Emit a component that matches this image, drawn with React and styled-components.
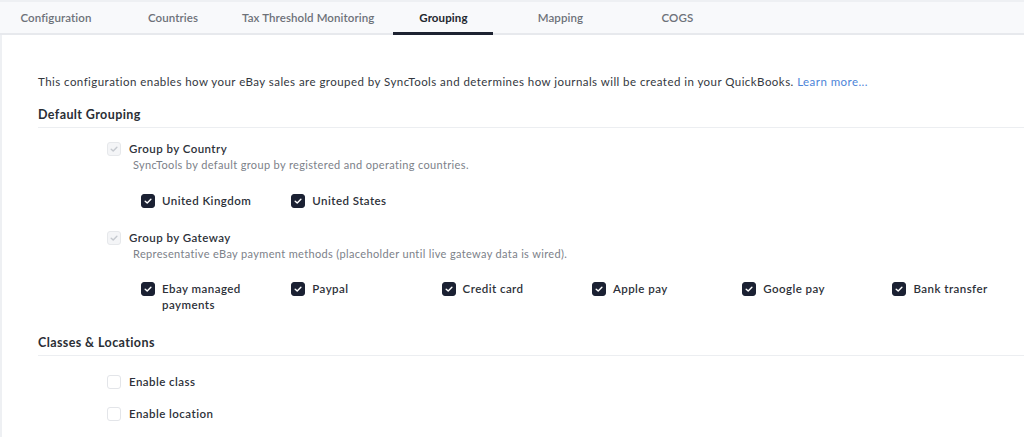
import React from "react";
import styled, { createGlobalStyle } from "styled-components";

const Global = createGlobalStyle`
  html, body { margin: 0; padding: 0; background: #ffffff; }
  body { font-family: "Lato", "Noto Sans", sans-serif; color: #2b2f36; letter-spacing: 0.45px; }
  * { box-sizing: border-box; }
`;

const Page = styled.div`
  width: 1024px;
  height: 437px;
  overflow: hidden;
  display: flex;
  flex-direction: column;
`;

const TabBar = styled.nav`
  height: 35px;
  flex: none;
  display: flex;
  gap: 17px;
  padding-left: 6px;
  background: #f8f9fb;
  border-top: 2px solid #eef0f3;
  border-bottom: 2px solid #e7e9ed;
`;

const Tab = styled.div`
  min-width: 100px;
  padding: 0 2px;
  display: flex;
  align-items: center;
  justify-content: center;
  font-size: 11.5px;
  letter-spacing: 0.1px;
  font-weight: ${(p) => (p.$active ? 700 : 600)};
  color: ${(p) => (p.$active ? "#23272f" : "#6d7179")};
  border-bottom: 3px solid ${(p) => (p.$active ? "#1e2331" : "transparent")};
  margin-bottom: -2px;
  padding-top: 1px;
`;

const Content = styled.div`
  flex: 1;
  border-left: 2px solid #eef0f3;
  padding: 39px 0 0 36px;
`;

const Intro = styled.p`
  margin: 0;
  font-size: 11.5px;
  line-height: 16px;
  color: #33373e;
`;

const Link = styled.a`
  color: #4c84d8;
  text-decoration: none;
`;

const SectionHeading = styled.h3`
  margin: ${(p) => p.$top}px 0 0 0;
  font-size: 12.5px;
  line-height: 16px;
  font-weight: 700;
  letter-spacing: 0.4px;
  color: #2a2e35;
  padding-bottom: 4px;
  border-bottom: 1px solid #eceef1;
`;

const Options = styled.div`
  padding-left: 69px;
  display: flex;
  flex-direction: column;
`;

const OptionRow = styled.label`
  display: flex;
  align-items: center;
  gap: 8px;
  margin-top: ${(p) => p.$top}px;
  height: 16px;
  font-size: 11.5px;
  font-weight: 600;
  color: #2d3139;
`;

const Description = styled.div`
  margin: 1px 0 0 26px;
  font-size: 11px;
  letter-spacing: 0.35px;
  line-height: 16px;
  color: #7c8189;
`;

const ChoiceGrid = styled.div`
  display: grid;
  grid-template-columns: repeat(6, 150.3px);
  margin: ${(p) => p.$top}px 0 0 34px;
`;

const Choice = styled.label`
  display: flex;
  align-items: flex-start;
  gap: 7px;
  font-size: 11.5px;
  font-weight: 600;
  line-height: 16px;
  color: #2d3139;
`;

const ChoiceText = styled.span`
  max-width: 100px;
`;

const Box = styled.span`
  flex: none;
  width: 14px;
  height: 14px;
  margin-top: 1px;
  border-radius: 3px;
  display: inline-flex;
  align-items: center;
  justify-content: center;
  background: ${(p) =>
    p.$variant === "dark" ? "#1b2133" : p.$variant === "disabled" ? "#f4f5f7" : "#ffffff"};
  border: 1px solid
    ${(p) =>
      p.$variant === "dark" ? "#1b2133" : p.$variant === "disabled" ? "#e6e8eb" : "#e3e5e9"};
`;

function Checkbox({ variant }) {
  const stroke = variant === "dark" ? "#ffffff" : "#c5c9cf";
  return (
    <Box $variant={variant}>
      {variant !== "empty" && (
        <svg width="10" height="10" viewBox="0 0 10 10" fill="none">
          <path
            d="M2.2 5.2 L4.2 7.1 L7.9 3.2"
            stroke={stroke}
            strokeWidth="1.4"
            strokeLinecap="round"
            strokeLinejoin="round"
          />
        </svg>
      )}
    </Box>
  );
}

const tabs = ["Configuration", "Countries", "Tax Threshold Monitoring", "Grouping", "Mapping", "COGS"];
const gateways = ["Ebay managed payments", "Paypal", "Credit card", "Apple pay", "Google pay", "Bank transfer"];

export default function App() {
  return (
    <Page>
      <Global />
      <TabBar>
        {tabs.map((t) => (
          <Tab key={t} $active={t === "Grouping"}>
            {t}
          </Tab>
        ))}
      </TabBar>
      <Content>
        <Intro>
          This configuration enables how your eBay sales are grouped by SyncTools and determines how journals
          will be created in your QuickBooks. <Link href="#">Learn more...</Link>
        </Intro>
        <SectionHeading $top={17}>Default Grouping</SectionHeading>
        <Options>
          <OptionRow $top={12}>
            <Checkbox variant="disabled" />
            Group by Country
          </OptionRow>
          <Description>SyncTools by default group by registered and operating countries.</Description>
          <ChoiceGrid $top={20}>
            <Choice>
              <Checkbox variant="dark" />
              <ChoiceText>United Kingdom</ChoiceText>
            </Choice>
            <Choice>
              <Checkbox variant="dark" />
              <ChoiceText>United States</ChoiceText>
            </Choice>
          </ChoiceGrid>
          <OptionRow $top={20}>
            <Checkbox variant="disabled" />
            Group by Gateway
          </OptionRow>
          <Description>
            Representative eBay payment methods (placeholder until live gateway data is wired).
          </Description>
          <ChoiceGrid $top={19}>
            {gateways.map((g) => (
              <Choice key={g}>
                <Checkbox variant="dark" />
                <ChoiceText>{g}</ChoiceText>
              </Choice>
            ))}
          </ChoiceGrid>
        </Options>
        <SectionHeading $top={22}>Classes &amp; Locations</SectionHeading>
        <Options>
          <OptionRow $top={17}>
            <Checkbox variant="empty" />
            Enable class
          </OptionRow>
          <OptionRow $top={16}>
            <Checkbox variant="empty" />
            Enable location
          </OptionRow>
        </Options>
      </Content>
    </Page>
  );
}
